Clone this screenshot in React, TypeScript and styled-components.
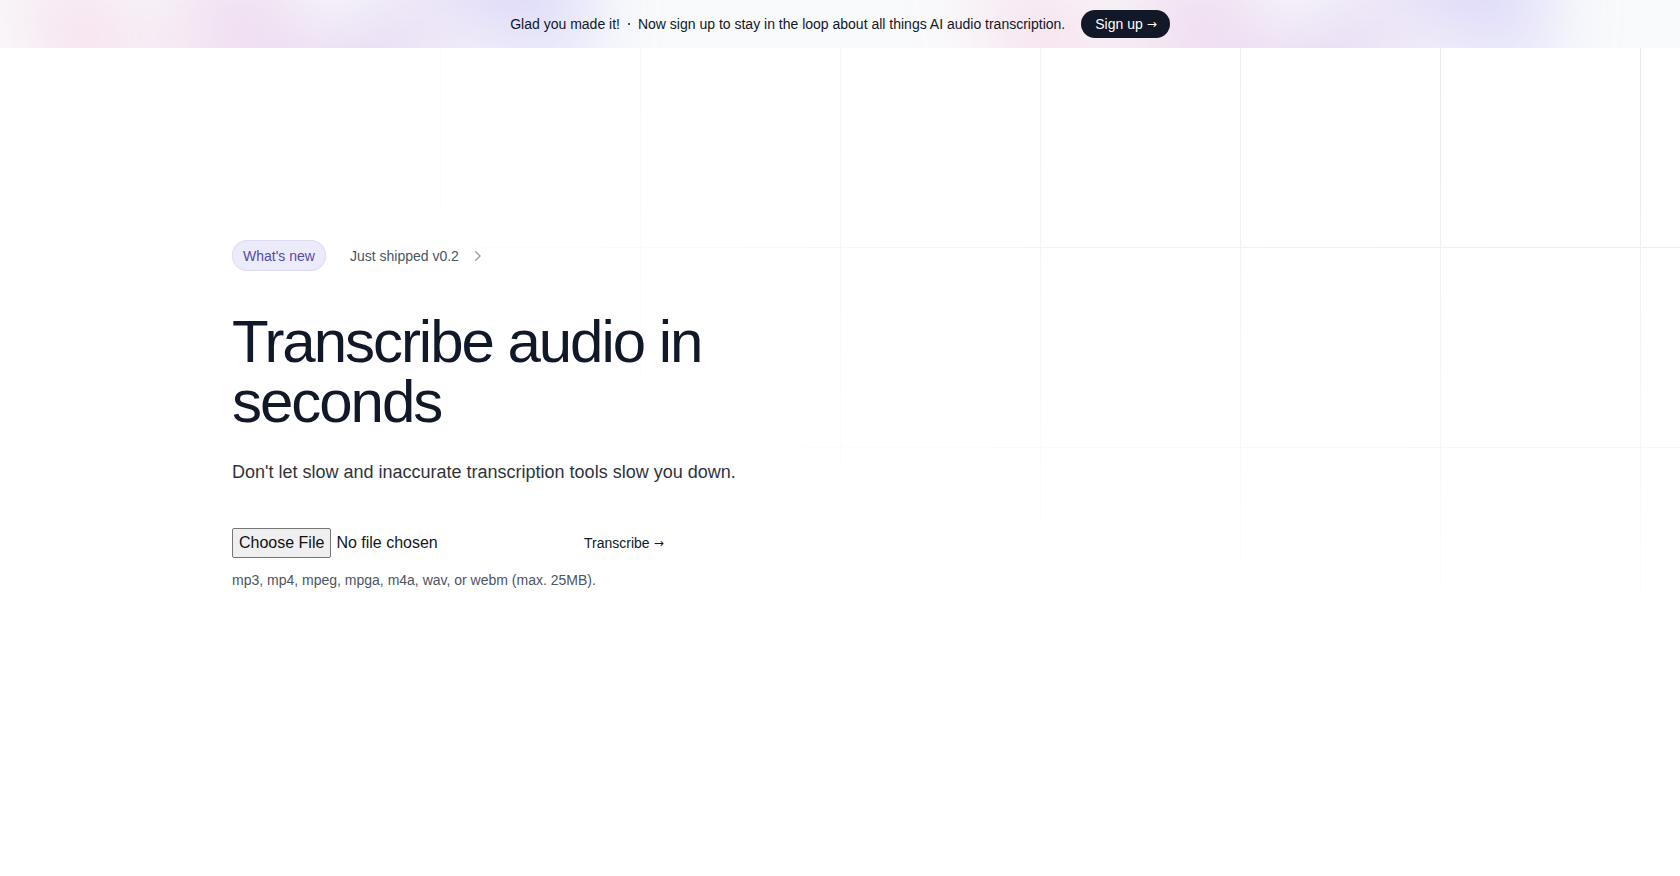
import React from "react";
import styled, { createGlobalStyle } from "styled-components";

const GlobalStyle = createGlobalStyle`
  html, body {
    margin: 0;
    padding: 0;
    background: #ffffff;
  }
  body {
    font-family: "Liberation Sans", Arial, sans-serif;
    color: #111827;
    -webkit-font-smoothing: antialiased;
  }
  * {
    box-sizing: border-box;
  }
`;

const Banner = styled.div`
  position: relative;
  isolation: isolate;
  overflow: hidden;
  display: flex;
  align-items: center;
  justify-content: center;
  gap: 16px;
  height: 48px;
  padding: 10px 14px;
  background: #f9fafb;
`;

const BlobWrap = styled.div<{ $left: number }>`
  position: absolute;
  left: ${(p) => p.$left}px;
  top: 50%;
  z-index: -1;
  transform: translateY(-50%);
  filter: blur(40px);
`;

const Blob = styled.div`
  width: 577px;
  aspect-ratio: 577 / 310;
  background: linear-gradient(to right, #ff80b5, #9089fc);
  opacity: 0.3;
  clip-path: polygon(
    74.8% 41.9%, 97.2% 73.2%, 100% 34.9%, 92.5% 0.4%, 87.5% 0%, 75% 28.6%,
    58.5% 54.6%, 50.1% 56.8%, 46.9% 44%, 48.3% 17.4%, 24.7% 53.9%, 0% 27.9%,
    11.9% 74.2%, 24.9% 54.1%, 68.6% 100%, 74.8% 41.9%
  );
`;

const BannerText = styled.p`
  margin: 0;
  font-size: 14px;
  line-height: 24px;
  color: #111827;
  display: flex;
  align-items: center;
`;

const Dot = styled.svg`
  width: 2px;
  height: 2px;
  margin: 0 8px;
  fill: currentColor;
`;

const SignUp = styled.a`
  display: inline-flex;
  align-items: center;
  gap: 4px;
  height: 28px;
  padding: 0 13px 0 14px;
  border-radius: 999px;
  background: #111827;
  color: #ffffff;
  font-size: 14px;
  text-decoration: none;
  cursor: pointer;
`;

const Arrow = styled.span`
  font-family: "DejaVu Sans", sans-serif;
  font-size: 12px;
  line-height: 1;
`;

const Hero = styled.section`
  position: relative;
  isolation: isolate;
  overflow: hidden;
  background: #ffffff;
`;

const GridBackdrop = styled.svg`
  position: absolute;
  inset: 0;
  z-index: -1;
  width: 100%;
  height: 100%;
  stroke: #e5e7eb;
  -webkit-mask-image: radial-gradient(100% 100% at top right, white, transparent 86%);
  mask-image: radial-gradient(100% 100% at top right, white, transparent 86%);
`;

const Container = styled.div`
  max-width: 1280px;
  margin: 0 auto;
  padding: 192px 32px 160px;
`;

const Content = styled.div`
  max-width: 576px;
`;

const NewsRow = styled.div`
  display: flex;
  align-items: center;
  gap: 24px;
`;

const Pill = styled.span`
  display: inline-flex;
  align-items: center;
  height: 31px;
  padding: 0 11px;
  border-radius: 999px;
  background: #ecebfa;
  box-shadow: inset 0 0 0 1px #dedcf4;
  color: #544ba3;
  font-size: 14px;
`;

const Shipped = styled.a`
  display: inline-flex;
  align-items: center;
  gap: 8px;
  color: #4b5563;
  font-size: 14px;
  line-height: 24px;
  text-decoration: none;
`;

const Title = styled.h1`
  margin: 41px 0 0;
  font-size: 60px;
  line-height: 60px;
  font-weight: 400;
  letter-spacing: -0.034em;
  color: #111827;
`;

const Lead = styled.p`
  margin: 24px 0 0;
  font-size: 18px;
  line-height: 32px;
  color: #2f343c;
`;

const UploadRow = styled.div`
  display: flex;
  align-items: center;
  gap: 24px;
  margin-top: 40px;
`;

const FileInput = styled.input`
  width: 328px;
  font-family: "Liberation Sans", Arial, sans-serif;
  font-size: 16px;
  color: #111827;

  &::file-selector-button {
    font-family: "Liberation Sans", Arial, sans-serif;
    font-size: 16px;
    padding: 5px 6px;
    margin-right: 5px;
    border: 1px solid #767676;
    border-radius: 2px;
    background: #efefef;
    color: #111111;
  }
`;

const TranscribeButton = styled.button`
  display: inline-flex;
  align-items: center;
  gap: 4px;
  border: 0;
  padding: 0;
  background: transparent;
  font-family: "Liberation Sans", Arial, sans-serif;
  font-size: 14px;
  line-height: 24px;
  color: #111827;
  cursor: pointer;
`;

const Hint = styled.p`
  margin: 12px 0 0;
  font-size: 14px;
  line-height: 20px;
  color: #4b5563;
`;

function ChevronRight() {
  return (
    <svg width="20" height="20" viewBox="0 0 20 20" fill="#9ca3af" aria-hidden="true">
      <path
        fillRule="evenodd"
        d="M8.22 5.22a.75.75 0 0 1 1.06 0l4.25 4.25a.75.75 0 0 1 0 1.06l-4.25 4.25a.75.75 0 0 1-1.06-1.06L11.94 10 8.22 6.28a.75.75 0 0 1 0-1.06Z"
        clipRule="evenodd"
      />
    </svg>
  );
}

export default function App() {
  return (
    <>
      <GlobalStyle />
      <Banner>
        <BlobWrap $left={8} aria-hidden="true">
          <Blob />
        </BlobWrap>
        <BlobWrap $left={968} aria-hidden="true">
          <Blob />
        </BlobWrap>
        <BannerText>
          Glad you made it!
          <Dot viewBox="0 0 2 2" aria-hidden="true">
            <circle cx={1} cy={1} r={1} />
          </Dot>
          Now sign up to stay in the loop about all things AI audio transcription.
        </BannerText>
        <SignUp>
          Sign up <Arrow>→</Arrow>
        </SignUp>
      </Banner>

      <Hero>
        <GridBackdrop aria-hidden="true">
          <defs>
            <pattern id="hero-grid" width={200} height={200} x="50%" y={-1} patternUnits="userSpaceOnUse">
              <path d="M.5 200V.5H200" fill="none" />
            </pattern>
          </defs>
          <rect width="100%" height="100%" strokeWidth={0} fill="url(#hero-grid)" />
        </GridBackdrop>

        <Container>
          <Content>
            <NewsRow>
              <Pill>What's new</Pill>
              <Shipped>
                <span>Just shipped v0.2</span>
                <ChevronRight />
              </Shipped>
            </NewsRow>
            <Title>Transcribe audio in seconds</Title>
            <Lead>Don't let slow and inaccurate transcription tools slow you down.</Lead>
            <UploadRow>
              <FileInput type="file" accept="audio/*" />
              <TranscribeButton type="button">
                Transcribe <Arrow>→</Arrow>
              </TranscribeButton>
            </UploadRow>
            <Hint>mp3, mp4, mpeg, mpga, m4a, wav, or webm (max. 25MB).</Hint>
          </Content>
        </Container>
      </Hero>
    </>
  );
}
